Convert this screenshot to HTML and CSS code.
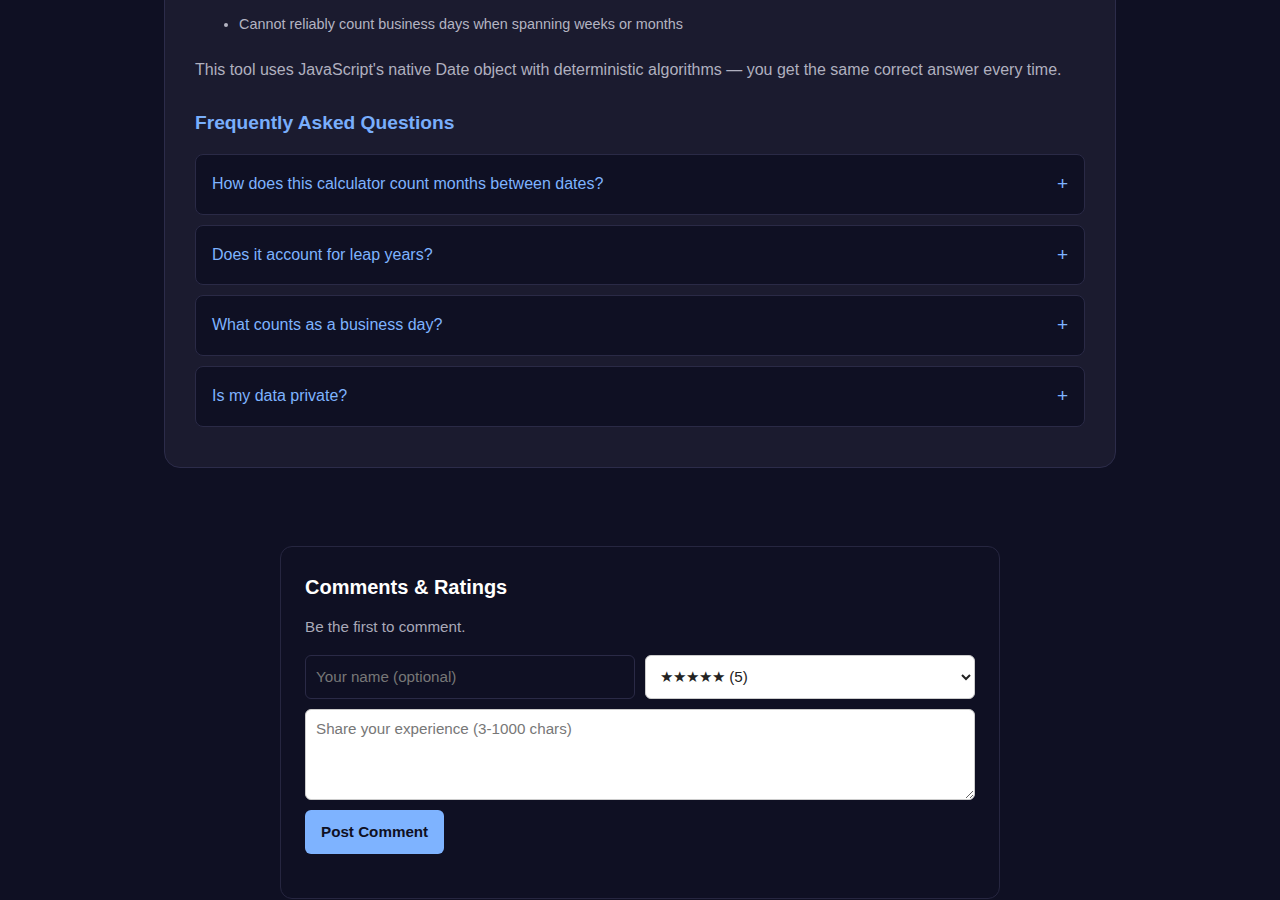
FILE: index.html
```html
<!DOCTYPE html>
<html lang="en">
<head>
  <meta charset="UTF-8" />
  <meta name="viewport" content="width=device-width, initial-scale=1" />
  <title>Date Difference Calculator</title>
  <link rel="stylesheet" href="styles.css">
</head>
<body>

<main class="page">

  <section class="tool-card">
    <ul class="notes">
      <li>Cannot reliably count business days when spanning weeks or months</li>
    </ul>

    <p class="lead">This tool uses JavaScript's native Date object with deterministic algorithms — you get the same correct answer every time.</p>

    <h2 class="faq-title">Frequently Asked Questions</h2>

    <div class="faq">
      <div class="faq-item">
        <span>How does this calculator count months between dates?</span>
        <span class="faq-toggle">+</span>
      </div>
      <div class="faq-item">
        <span>Does it account for leap years?</span>
        <span class="faq-toggle">+</span>
      </div>
      <div class="faq-item">
        <span>What counts as a business day?</span>
        <span class="faq-toggle">+</span>
      </div>
      <div class="faq-item">
        <span>Is my data private?</span>
        <span class="faq-toggle">+</span>
      </div>
    </div>
  </section>

  <section class="comments">
    <h3>Comments &amp; Ratings</h3>
    <p class="empty">Be the first to comment.</p>

    <form class="comment-form">
      <div class="form-row">
        <input type="text" class="name-input" placeholder="Your name (optional)" />
        <select class="rating-select">
          <option>★★★★★ (5)</option>
          <option>★★★★☆ (4)</option>
          <option>★★★☆☆ (3)</option>
          <option>★★☆☆☆ (2)</option>
          <option>★☆☆☆☆ (1)</option>
        </select>
      </div>
      <textarea placeholder="Share your experience (3-1000 chars)"></textarea>
      <button type="submit">Post Comment</button>
    </form>
  </section>

</main>

</body>
</html>
```

FILE: styles.css
```css
* {
  box-sizing: border-box;
}
body {
  font-family: 'Liberation Sans', Arial, Helvetica, sans-serif;
  background: #0f1023;
  color: #b0b0bf;
  margin: 0;
}
.page {
  display: flex;
  flex-direction: column;
  align-items: center;
}

/* tool card (page is scrolled, top of card sits above the fold) */
.tool-card {
  width: 952px;
  margin-top: -19px;
  background: #1b1b2f;
  border: 1px solid #2c2c4a;
  border-radius: 16px;
  padding: 30px;
}
.notes {
  margin: 0 0 21px;
  padding-left: 44px;
  font-size: 14.4px;
  line-height: 24px;
  color: #b4b4c2;
}
.lead {
  margin: 0;
  font-size: 16px;
  line-height: 26px;
}
.faq-title {
  margin: 27px 0 19px;
  font-size: 19.2px;
  line-height: 25px;
  color: #79aefc;
}
.faq-item {
  display: flex;
  justify-content: space-between;
  align-items: center;
  background: #0f1023;
  border: 1px solid #2a2a46;
  border-radius: 8px;
  padding: 18px 16px;
  margin-bottom: 10px;
  font-size: 16px;
  line-height: 22.7px;
  color: #7eb3ff;
  cursor: pointer;
}
.faq-toggle {
  font-size: 19px;
  font-weight: 300;
}

/* comments */
.comments {
  width: 720px;
  margin-top: 78px;
  border: 1px solid #262640;
  border-radius: 12px;
  padding: 24px 24px 44px;
}
.comments h3 {
  margin: 0;
  font-size: 20px;
  line-height: 32px;
  color: #fff;
}
.empty {
  margin: 12px 0 16px;
  font-size: 15.2px;
  line-height: 24px;
  color: #a9a9b8;
}
.comment-form {
  display: flex;
  flex-direction: column;
  align-items: flex-start;
  gap: 10px;
}
.form-row {
  display: grid;
  grid-template-columns: 1fr 1fr;
  gap: 10px;
  width: 100%;
}
.name-input,
.rating-select,
textarea {
  font-family: inherit;
  font-size: 15.2px;
  border-radius: 6px;
  height: 44px;
}
.name-input {
  background: transparent;
  border: 1px solid #2a2a46;
  color: #ddd;
  padding: 12px 10px;
}
.name-input::placeholder,
textarea::placeholder {
  color: #777;
}
.rating-select {
  background: #fff;
  border: 1px solid #ccc;
  color: #222;
  padding: 0 10px;
}
textarea {
  width: 100%;
  height: 91px;
  background: #fff;
  border: 1px solid #ccc;
  padding: 10px;
  color: #222;
}
button {
  background: #7eb3ff;
  border: none;
  color: #0f1023;
  padding: 0 16px;
  height: 44px;
  border-radius: 6px;
  font-family: inherit;
  font-weight: 700;
  font-size: 15.2px;
  cursor: pointer;
}
button:hover {
  background: #6aa3f5;
}
```
